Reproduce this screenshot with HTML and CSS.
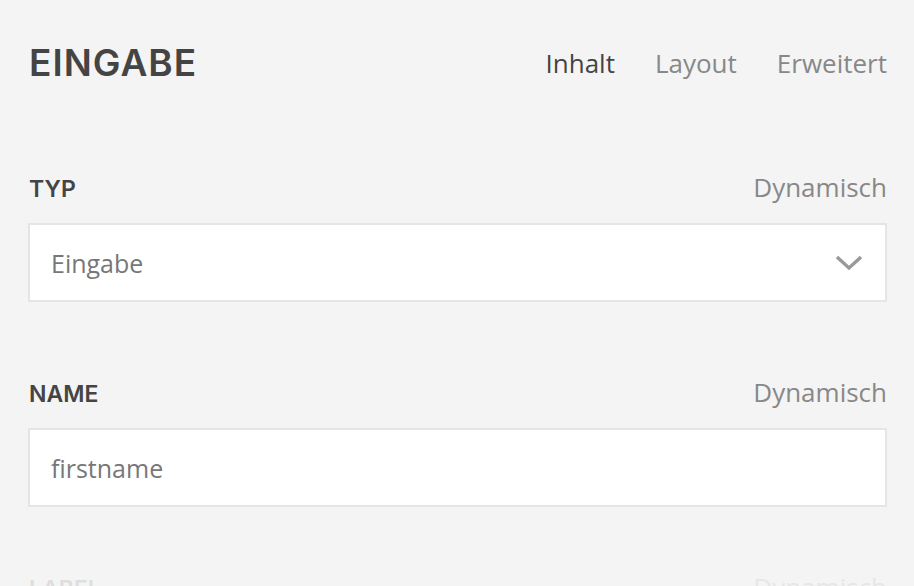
FILE: index.html
```html
<!DOCTYPE html>
<html lang="de">
<head>
<meta charset="utf-8">
<title>Eingabe</title>
<link rel="stylesheet" href="styles.css">
</head>
<body>
<div class="panel">
  <header class="header">
    <h1 class="title">EINGABE</h1>
    <nav class="tabs">
      <a class="tab active">Inhalt</a>
      <a class="tab">Layout</a>
      <a class="tab">Erweitert</a>
    </nav>
  </header>

  <div class="field">
    <div class="field-head">
      <span class="label">TYP</span>
      <span class="dyn">Dynamisch</span>
    </div>
    <div class="control select">
      <span class="value">Eingabe</span>
      <svg class="chevron" width="28" height="18" viewBox="0 0 28 18"><polyline points="2,3 14,14 26,3" fill="none" stroke="#999" stroke-width="3.4"/></svg>
    </div>
  </div>

  <div class="field field-tight">
    <div class="field-head">
      <span class="label">NAME</span>
      <span class="dyn">Dynamisch</span>
    </div>
    <div class="control">
      <span class="value">firstname</span>
    </div>
  </div>

  <div class="field field-faded">
    <div class="field-head">
      <span class="label">LABEL</span>
      <span class="dyn">Dynamisch</span>
    </div>
    <div class="control">
      <span class="value"></span>
    </div>
  </div>
</div>
</body>
</html>
```

FILE: styles.css
```css
html, body {
  margin: 0;
  padding: 0;
  background: #f4f4f4;
}
body {
  font-family: "Open Sans", "Liberation Sans", sans-serif;
  color: #444;
  overflow: hidden;
}
.panel {
  padding: 41px 27px 0 28px;
}
.header {
  display: flex;
  justify-content: space-between;
  align-items: center;
  margin-bottom: 82px;
}
.title {
  margin: 0;
  font-family: Inter, "DejaVu Sans", sans-serif;
  font-weight: 600;
  font-size: 37px;
  line-height: 44px;
  letter-spacing: 1px;
  color: #444;
  padding-left: 1px;
}
.tabs {
  display: flex;
  gap: 40px;
}
.tab {
  font-size: 26px;
  line-height: 44px;
  color: #888;
}
.tab.active {
  color: #444;
}
.field {
  margin-bottom: 70px;
}
.field-tight {
  margin-bottom: 60px;
}
.field-faded {
  opacity: 0.12;
}
.field-head {
  display: flex;
  justify-content: space-between;
  align-items: baseline;
  height: 40px;
  margin-bottom: 16px;
}
.label {
  font-family: Inter, "DejaVu Sans", sans-serif;
  font-weight: 600;
  font-size: 23px;
  line-height: 40px;
  color: #444;
  padding-left: 1px;
}
.dyn {
  font-size: 26px;
  line-height: 40px;
  color: #888;
}
.control {
  display: flex;
  align-items: center;
  justify-content: space-between;
  height: 75px;
  background: #fff;
  border: 2px solid #e5e5e5;
  padding: 0 22px 0 21px;
}
.value {
  font-size: 25px;
  color: #777;
}
.chevron {
  display: block;
}
```
